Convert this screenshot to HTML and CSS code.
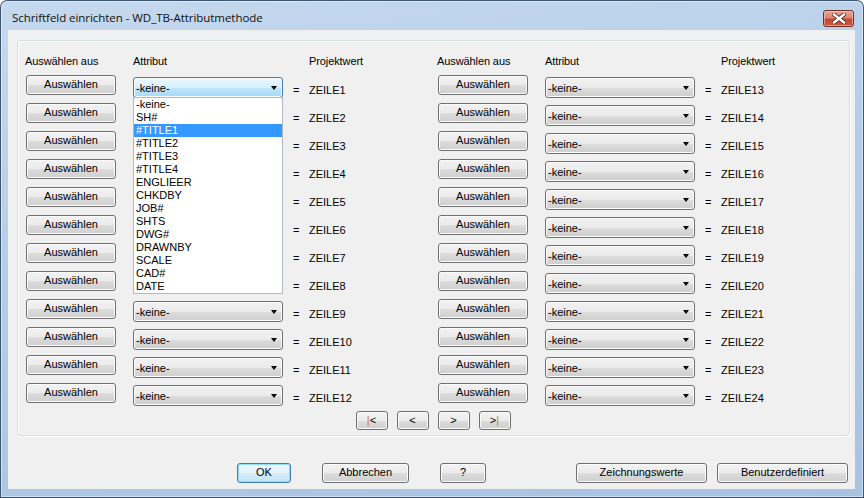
FILE: index.html
```html
<!DOCTYPE html>
<html lang="de">
<head>
  <meta charset="UTF-8">
  <title>Schriftfeld einrichten - WD_TB-Attributmethode</title>
  <link rel="stylesheet" href="styles.css">
</head>
<body>
  <div class="window">
    <div class="titlebar">
      <span class="title">Schriftfeld einrichten - WD_TB-Attributmethode</span>
      <span class="close">
        <svg width="14" height="11" viewBox="0 0 14 11">
          <path d="M2 1.5 L12 9.5 M12 1.5 L2 9.5" stroke="#5a2a22" stroke-width="4.2" stroke-linecap="square"/>
          <path d="M2 1.5 L12 9.5 M12 1.5 L2 9.5" stroke="#ffffff" stroke-width="2.4" stroke-linecap="square"/>
        </svg>
      </span>
    </div>

    <div class="client">
      <div class="group">
        <div class="columns">
          <div class="half">
            <div class="head">Auswählen aus</div>
            <div class="head">Attribut</div>
            <div class="head"></div>
            <div class="head">Projektwert</div>

            <div><span class="btn pick">Auswählen</span></div>
            <div class="combo-cell">
              <span class="combo open"><span>-keine-</span></span>
              <ul class="droplist">
                <li>-keine-</li>
                <li>SH#</li>
                <li class="sel">#TITLE1</li>
                <li>#TITLE2</li>
                <li>#TITLE3</li>
                <li>#TITLE4</li>
                <li>ENGLIEER</li>
                <li>CHKDBY</li>
                <li>JOB#</li>
                <li>SHTS</li>
                <li>DWG#</li>
                <li>DRAWNBY</li>
                <li>SCALE</li>
                <li>CAD#</li>
                <li>DATE</li>
              </ul>
            </div>
            <div class="eq">=</div><div class="val">ZEILE1</div>

            <!-- rows 2-8: combos sit under the open list -->
            <div><span class="btn pick">Auswählen</span></div><div><span class="combo covered"><span>-keine-</span></span></div><div class="eq">=</div><div class="val">ZEILE2</div>
            <div><span class="btn pick">Auswählen</span></div><div><span class="combo covered"><span>-keine-</span></span></div><div class="eq">=</div><div class="val">ZEILE3</div>
            <div><span class="btn pick">Auswählen</span></div><div><span class="combo covered"><span>-keine-</span></span></div><div class="eq">=</div><div class="val">ZEILE4</div>
            <div><span class="btn pick">Auswählen</span></div><div><span class="combo covered"><span>-keine-</span></span></div><div class="eq">=</div><div class="val">ZEILE5</div>
            <div><span class="btn pick">Auswählen</span></div><div><span class="combo covered"><span>-keine-</span></span></div><div class="eq">=</div><div class="val">ZEILE6</div>
            <div><span class="btn pick">Auswählen</span></div><div><span class="combo covered"><span>-keine-</span></span></div><div class="eq">=</div><div class="val">ZEILE7</div>
            <div><span class="btn pick">Auswählen</span></div><div><span class="combo covered"><span>-keine-</span></span></div><div class="eq">=</div><div class="val">ZEILE8</div>
            <div><span class="btn pick">Auswählen</span></div><div><span class="combo"><span>-keine-</span></span></div><div class="eq">=</div><div class="val">ZEILE9</div>
            <div><span class="btn pick">Auswählen</span></div><div><span class="combo"><span>-keine-</span></span></div><div class="eq">=</div><div class="val">ZEILE10</div>
            <div><span class="btn pick">Auswählen</span></div><div><span class="combo"><span>-keine-</span></span></div><div class="eq">=</div><div class="val">ZEILE11</div>
            <div><span class="btn pick">Auswählen</span></div><div><span class="combo"><span>-keine-</span></span></div><div class="eq">=</div><div class="val">ZEILE12</div>
          </div>

          <div class="half">
            <div class="head">Auswählen aus</div>
            <div class="head">Attribut</div>
            <div class="head"></div>
            <div class="head">Projektwert</div>

            <div><span class="btn pick">Auswählen</span></div><div><span class="combo"><span>-keine-</span></span></div><div class="eq">=</div><div class="val">ZEILE13</div>
            <div><span class="btn pick">Auswählen</span></div><div><span class="combo"><span>-keine-</span></span></div><div class="eq">=</div><div class="val">ZEILE14</div>
            <div><span class="btn pick">Auswählen</span></div><div><span class="combo"><span>-keine-</span></span></div><div class="eq">=</div><div class="val">ZEILE15</div>
            <div><span class="btn pick">Auswählen</span></div><div><span class="combo"><span>-keine-</span></span></div><div class="eq">=</div><div class="val">ZEILE16</div>
            <div><span class="btn pick">Auswählen</span></div><div><span class="combo"><span>-keine-</span></span></div><div class="eq">=</div><div class="val">ZEILE17</div>
            <div><span class="btn pick">Auswählen</span></div><div><span class="combo"><span>-keine-</span></span></div><div class="eq">=</div><div class="val">ZEILE18</div>
            <div><span class="btn pick">Auswählen</span></div><div><span class="combo"><span>-keine-</span></span></div><div class="eq">=</div><div class="val">ZEILE19</div>
            <div><span class="btn pick">Auswählen</span></div><div><span class="combo"><span>-keine-</span></span></div><div class="eq">=</div><div class="val">ZEILE20</div>
            <div><span class="btn pick">Auswählen</span></div><div><span class="combo"><span>-keine-</span></span></div><div class="eq">=</div><div class="val">ZEILE21</div>
            <div><span class="btn pick">Auswählen</span></div><div><span class="combo"><span>-keine-</span></span></div><div class="eq">=</div><div class="val">ZEILE22</div>
            <div><span class="btn pick">Auswählen</span></div><div><span class="combo"><span>-keine-</span></span></div><div class="eq">=</div><div class="val">ZEILE23</div>
            <div><span class="btn pick">Auswählen</span></div><div><span class="combo"><span>-keine-</span></span></div><div class="eq">=</div><div class="val">ZEILE24</div>
          </div>
        </div>

        <div class="nav">
          <span class="btn navbtn"><span class="bar">|</span>&lt;</span>
          <span class="btn navbtn">&lt;</span>
          <span class="btn navbtn">&gt;</span>
          <span class="btn navbtn">&gt;<span class="bar">|</span></span>
        </div>
      </div>

      <div class="actions">
        <span class="btn ok">OK</span>
        <span class="btn cancel">Abbrechen</span>
        <span class="btn help">?</span>
        <span class="btn wide drawing">Zeichnungswerte</span>
        <span class="btn wide custom">Benutzerdefiniert</span>
      </div>
    </div>
  </div>
</body>
</html>
```

FILE: styles.css
```css
:root {
  --frame: #bcd3ea;
  --client: #f0f0f0;
  --btn-border: #707070;
  --focus-border: #3c7fb1;
  --ui-font: "Liberation Sans", Arial, sans-serif;
}

html, body {
  margin: 0;
  padding: 0;
  width: 864px;
  height: 498px;
  overflow: hidden;
  background: #ffffff;
}

.window {
  box-sizing: border-box;
  width: 864px;
  height: 498px;
  border: 1px solid #3d5773;
  border-bottom-color: #1f5e78;
  border-radius: 7px 7px 0 0;
  padding: 0 8px 8px 7px;
  background: linear-gradient(170deg, #c5d9ee 0%, #b4cde7 45%, #a8c3e2 100%);
  box-shadow: inset 0 0 0 1px rgba(255, 255, 255, 0.45);
}

/* title bar */
.titlebar {
  height: 29px;
  display: flex;
  justify-content: space-between;
  align-items: flex-start;
}

.title {
  font-family: "Open Sans", "Noto Sans", sans-serif;
  font-size: 11.5px;
  color: #111;
  padding: 9px 0 0 4px;
  letter-spacing: -0.05px;
}

.close {
  box-sizing: border-box;
  width: 31px;
  height: 17px;
  margin: 9px 1px 0 0;
  border: 1px solid #6e2f26;
  border-radius: 3px;
  background: linear-gradient(#e6a596 0%, #d98572 45%, #c54a33 55%, #c9573c 100%);
  box-shadow: inset 0 0 0 1px rgba(255, 220, 210, 0.5);
  display: flex;
  align-items: center;
  justify-content: center;
}

/* client area */
.client {
  height: 459px;
  background: var(--client);
  display: flex;
  flex-direction: column;
  font-family: var(--ui-font);
  font-size: 11px;
  color: #000;
}

.group {
  box-sizing: border-box;
  width: 833px;
  margin: 10px 0 0 9px;
  padding: 13px 0 5px 7px;
  border: 1px solid #d5dfe5;
  border-radius: 3px;
  box-shadow: inset 1px 1px 0 #ffffff, 1px 1px 0 #ffffff;
}

.columns {
  display: flex;
}

.half {
  display: grid;
  grid-template-columns: 108px 155px 21px 128px;
  grid-template-rows: 21px repeat(12, 28px);
}

.head {
  line-height: 14px;
  letter-spacing: -0.1px;
}

.eq {
  padding: 9px 0 0 5px;
  line-height: 13px;
}

.val {
  padding-top: 9px;
  line-height: 13px;
}

/* buttons */
.btn {
  box-sizing: border-box;
  display: block;
  height: 20px;
  line-height: 17px;
  text-align: center;
  border: 1px solid var(--btn-border);
  border-radius: 3px;
  background: linear-gradient(#f2f2f2 0%, #ebebeb 50%, #dddddd 51%, #cfcfcf 100%);
  box-shadow: inset 0 0 0 1px #fbfbfb;
  color: #000;
  white-space: nowrap;
}

.pick {
  width: 90px;
  margin-left: 1px;
}

/* combo boxes */
.combo-cell {
  position: relative;
}

.combo {
  box-sizing: border-box;
  display: flex;
  align-items: center;
  width: 150px;
  height: 21px;
  margin-top: 2px;
  padding: 0 5px 0 2px;
  border: 1px solid var(--btn-border);
  border-radius: 3px;
  background: linear-gradient(#f2f2f2 0%, #ebebeb 50%, #dddddd 51%, #cfcfcf 100%);
  box-shadow: inset 0 0 0 1px #fbfbfb;
}

.combo::after {
  content: "";
  margin-left: auto;
  border-left: 3.5px solid transparent;
  border-right: 3.5px solid transparent;
  border-top: 4px solid #000;
}

.combo.covered {
  visibility: hidden;
}

.combo.open {
  border-color: var(--focus-border);
  background: linear-gradient(#eaf6fd 0%, #d9f0fc 50%, #bee6fd 51%, #a7d9f5 100%);
}

.droplist {
  position: absolute;
  top: 22px;
  left: 0;
  box-sizing: border-box;
  width: 150px;
  margin: 0;
  padding: 0;
  list-style: none;
  background: #ffffff;
  border: 1px solid #b4b8c4;
  z-index: 2;
}

.droplist li {
  height: 13px;
  line-height: 13px;
  padding-left: 2px;
}

.droplist li.sel {
  background: #3399ff;
  color: #ffffff;
}

/* paging */
.nav {
  display: flex;
  justify-content: center;
  gap: 9px;
  padding-right: 8px;
}

.navbtn {
  width: 32px;
  height: 19px;
  line-height: 16px;
}

.bar {
  color: #c87a2a;
}

/* dialog buttons */
.actions {
  display: flex;
  margin-top: 27px;
}

.ok {
  width: 54px;
  margin-left: 229px;
  border-color: var(--focus-border);
  box-shadow: inset 0 0 0 1px #8fdcf8;
  background: linear-gradient(#eef8fd 0%, #e2f3fc 50%, #d3ecfa 51%, #c4e5f7 100%);
}

.cancel {
  width: 87px;
  margin-left: 31px;
}

.help {
  width: 46px;
  margin-left: 31px;
}

.wide {
  width: 131px;
}

.drawing {
  margin-left: 90px;
}

.custom {
  margin-left: 10px;
}
```
